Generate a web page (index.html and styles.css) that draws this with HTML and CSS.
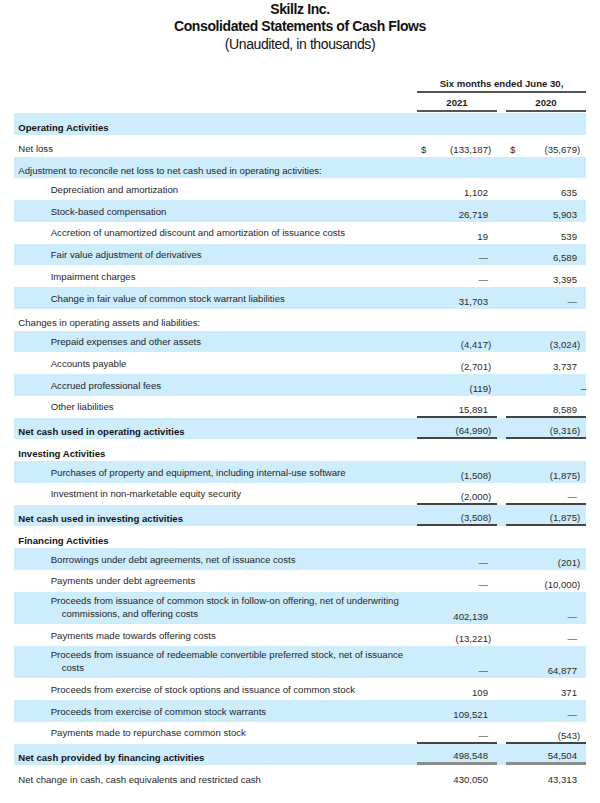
FILE: index.html
```html
<!DOCTYPE html>
<html lang="en">
<head>
<meta charset="utf-8">
<title>Skillz Inc. - Consolidated Statements of Cash Flows</title>
<link rel="stylesheet" href="styles.css">
</head>
<body>
<header class="title">
  <h1 class="company">Skillz Inc.</h1>
  <h2 class="statement">Consolidated Statements of Cash Flows</h2>
  <p class="subtitle">(Unaudited, in thousands)</p>
</header>

<section class="sheet">
  <div class="head head-period"><span class="period">Six months ended June 30,</span></div>
  <div class="head head-years"><span class="year">2021</span><span class="year">2020</span></div>

  <div class="rows">
    <div class="row"><div class="label bold">Operating Activities</div><div class="val"></div><div class="val"></div></div>
    <div class="row"><div class="label">Net loss</div><div class="val"><span class="cur">$</span><span>(133,187<span class="p">)</span></span></div><div class="val"><span class="cur">$</span><span>(35,679<span class="p">)</span></span></div></div>
    <div class="row"><div class="label">Adjustment to reconcile net loss to net cash used in operating activities:</div><div class="val"></div><div class="val"></div></div>
    <div class="row"><div class="label sub">Depreciation and amortization</div><div class="val">1,102</div><div class="val">635</div></div>
    <div class="row"><div class="label sub">Stock-based compensation</div><div class="val">26,719</div><div class="val">5,903</div></div>
    <div class="row"><div class="label sub">Accretion of unamortized discount and amortization of issuance costs</div><div class="val">19</div><div class="val">539</div></div>
    <div class="row"><div class="label sub">Fair value adjustment of derivatives</div><div class="val">—</div><div class="val">6,589</div></div>
    <div class="row"><div class="label sub">Impairment charges</div><div class="val">—</div><div class="val">3,395</div></div>
    <div class="row"><div class="label sub">Change in fair value of common stock warrant liabilities</div><div class="val">31,703</div><div class="val">—</div></div>
    <div class="row"><div class="label">Changes in operating assets and liabilities:</div><div class="val"></div><div class="val"></div></div>
    <div class="row"><div class="label sub">Prepaid expenses and other assets</div><div class="val">(4,417<span class="p">)</span></div><div class="val">(3,024<span class="p">)</span></div></div>
    <div class="row"><div class="label sub">Accounts payable</div><div class="val">(2,701<span class="p">)</span></div><div class="val">3,737</div></div>
    <div class="row"><div class="label sub">Accrued professional fees</div><div class="val">(119<span class="p">)</span></div><div class="val"><span class="stray">–</span></div></div>
    <div class="row"><div class="label sub">Other liabilities</div><div class="val rule">15,891</div><div class="val rule">8,589</div></div>
    <div class="row"><div class="label bold">Net cash used in operating activities</div><div class="val rule">(64,990<span class="p">)</span></div><div class="val rule">(9,316<span class="p">)</span></div></div>
    <div class="row"><div class="label bold">Investing Activities</div><div class="val"></div><div class="val"></div></div>
    <div class="row"><div class="label sub">Purchases of property and equipment, including internal-use software</div><div class="val">(1,508<span class="p">)</span></div><div class="val">(1,875<span class="p">)</span></div></div>
    <div class="row"><div class="label sub">Investment in non-marketable equity security</div><div class="val rule">(2,000<span class="p">)</span></div><div class="val rule">—</div></div>
    <div class="row"><div class="label bold">Net cash used in investing activities</div><div class="val rule">(3,508<span class="p">)</span></div><div class="val rule">(1,875<span class="p">)</span></div></div>
    <div class="row"><div class="label bold">Financing Activities</div><div class="val"></div><div class="val"></div></div>
    <div class="row"><div class="label sub">Borrowings under debt agreements, net of issuance costs</div><div class="val">—</div><div class="val">(201<span class="p">)</span></div></div>
    <div class="row"><div class="label sub">Payments under debt agreements</div><div class="val">—</div><div class="val">(10,000<span class="p">)</span></div></div>
    <div class="row double"><div class="label sub">Proceeds from issuance of common stock in follow-on offering, net of underwriting commissions, and offering costs</div><div class="val">402,139</div><div class="val">—</div></div>
    <div class="row"><div class="label sub">Payments made towards offering costs</div><div class="val">(13,221<span class="p">)</span></div><div class="val">—</div></div>
    <div class="row double"><div class="label sub">Proceeds from issuance of redeemable convertible preferred stock, net of issuance costs</div><div class="val">—</div><div class="val">64,877</div></div>
    <div class="row"><div class="label sub">Proceeds from exercise of stock options and issuance of common stock</div><div class="val">109</div><div class="val">371</div></div>
    <div class="row"><div class="label sub">Proceeds from exercise of common stock warrants</div><div class="val">109,521</div><div class="val">—</div></div>
    <div class="row"><div class="label sub">Payments made to repurchase common stock</div><div class="val rule">—</div><div class="val rule">(543<span class="p">)</span></div></div>
    <div class="row"><div class="label bold">Net cash provided by financing activities</div><div class="val total">498,548</div><div class="val total">54,504</div></div>
    <div class="row"><div class="label">Net change in cash, cash equivalents and restricted cash</div><div class="val">430,050</div><div class="val">43,313</div></div>
  </div>
</section>
</body>
</html>
```

FILE: styles.css
```css
* {
  box-sizing: border-box;
  margin: 0;
  padding: 0;
}

body {
  margin: 0;
  background: #ffffff;
  color: #1f1f1f;
  font-family: "Liberation Sans", Arial, sans-serif;
  font-size: 9.6px;
}

.title {
  text-align: center;
  color: #111111;
  font-size: 14px;
  line-height: 17.5px;
  letter-spacing: -0.4px;
  padding-top: 0.5px;
}

.company,
.statement {
  font-size: 14px;
  font-weight: bold;
}

.subtitle {
  font-weight: normal;
}

.sheet {
  margin: 20.7px 14px 0;
}

.head {
  display: grid;
  grid-template-columns: 1fr 80px 80px;
  column-gap: 9px;
  height: 19px;
  font-weight: bold;
  line-height: 12px;
  color: #1a1a1a;
}

.period {
  grid-column: 2 / 4;
  text-align: center;
  padding-top: 4px;
  border-bottom: 2px solid #555555;
}

.year {
  text-align: center;
  padding-top: 4px;
  border-bottom: 2px solid #555555;
}

.year:first-child {
  grid-column: 2;
}

.rows {
  margin-top: 1.5px;
}

.row {
  display: grid;
  grid-template-columns: 1fr 80px 80px;
  column-gap: 9px;
  height: 21.75px;
  line-height: 12px;
}

.row:nth-child(odd) {
  background: #cdecfc;
}

.label {
  padding: 8.5px 0 0 4.3px;
}

.label.sub {
  padding: 5.5px 0 0 36.7px;
}

.row.double {
  height: 32.5px;
}

.row.double .label {
  padding: 3.5px 0 0 47.7px;
  text-indent: -11px;
  line-height: 12.4px;
}

.bold {
  font-weight: bold;
  color: #141414;
}

.val {
  display: flex;
  justify-content: flex-end;
  align-items: flex-end;
  padding: 0 9px 1px 4px;
  white-space: nowrap;
  color: #2a2a2a;
}

.val.rule {
  border-bottom: 2px solid #444444;
  padding-bottom: 0;
}

.val.total {
  border-bottom: 3px solid #8c8c8c;
  padding-bottom: 0;
}

.cur {
  margin-right: auto;
}

.p {
  margin-right: -3.2px;
}

.stray {
  margin-right: -9px;
}
```
